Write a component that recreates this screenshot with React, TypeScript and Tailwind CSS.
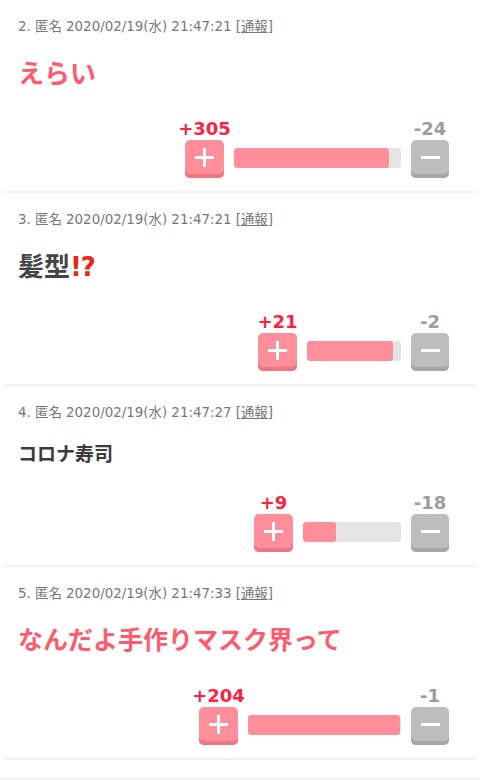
import { ReactNode } from "react";

interface Comment {
  no: number;
  time: string;
  body: ReactNode;
  titleClass: string;
  plus: number;
  minus: number;
  barWidth: number;
}

const comments: Comment[] = [
  {
    no: 2,
    time: "21:47:21",
    body: "えらい",
    titleClass: "text-[26px] leading-[40px] text-[#ff5b6e]",
    plus: 305,
    minus: 24,
    barWidth: 167,
  },
  {
    no: 3,
    time: "21:47:21",
    body: (
      <>
        髪型
        <span className="text-[#e8261a] tracking-[-1px]">!?</span>
      </>
    ),
    titleClass: "text-[26px] leading-[40px] text-[#444]",
    plus: 21,
    minus: 2,
    barWidth: 94,
  },
  {
    no: 4,
    time: "21:47:27",
    body: "コロナ寿司",
    titleClass: "text-[19px] leading-[28px] text-[#3c3c3c]",
    plus: 9,
    minus: 18,
    barWidth: 98,
  },
  {
    no: 5,
    time: "21:47:33",
    body: "なんだよ手作りマスク界って",
    titleClass: "text-[25px] leading-[40px] text-[#ff5b6e]",
    plus: 204,
    minus: 1,
    barWidth: 153,
  },
];

const font = "font-['DejaVu_Sans','Noto_Sans_CJK_JP',sans-serif]";

const VoteButton = ({ kind }: { kind: "plus" | "minus" }) => (
  <div
    className={
      kind === "plus"
        ? "w-[39px] h-[38px] shrink-0 rounded-[5px] bg-[#ff8e9a] shadow-[inset_0_-4px_0_#ec7682] flex items-center justify-center pb-[4px]"
        : "w-[38px] h-[38px] shrink-0 rounded-[5px] bg-[#bdbdbd] shadow-[inset_0_-4px_0_#a6a6a6] flex items-center justify-center pb-[4px]"
    }
  >
    <svg width="19" height="19" viewBox="0 0 19 19">
      <rect x="0" y="8" width="19" height="3" fill="#fff" />
      {kind === "plus" && <rect x="8" y="0" width="3" height="19" fill="#fff" />}
    </svg>
  </div>
);

const CommentRow = ({ c }: { c: Comment }) => {
  const fill = Math.round((c.barWidth * c.plus) / (c.plus + c.minus));
  return (
    <div className="mx-[5px] border-b-2 border-[#f1f1f1] px-[13px] pt-[17px] pb-[13px]">
      <div className="text-[13.4px] leading-[20px] text-[#777]">
        {c.no}. 匿名 2020/02/19(水) {c.time} [<span className="underline">通報</span>]
      </div>
      <div className={`mt-[17px] font-bold ${c.titleClass}`}>{c.body}</div>
      <div className="mt-[24px] flex justify-end pr-[13px]">
        <div className="flex items-end">
          <div className="w-[39px] flex flex-col items-center">
            <span className="whitespace-nowrap text-[18px] leading-[22px] font-bold text-[#ff2140]">+{c.plus}</span>
            <VoteButton kind="plus" />
          </div>
          <div
            className="mx-[10px] mb-[10px] h-[20px] rounded-[3px] bg-[#e4e4e4] overflow-hidden flex"
            style={{ width: c.barWidth }}
          >
            <div className="h-full bg-[#ff8e9a] rounded-[3px]" style={{ width: fill }} />
          </div>
          <div className="w-[38px] flex flex-col items-center">
            <span className="whitespace-nowrap text-[18px] leading-[22px] font-bold text-[#9c9c9c]">-{c.minus}</span>
            <VoteButton kind="minus" />
          </div>
        </div>
      </div>
    </div>
  );
};

export default function App() {
  return (
    <div className={`w-[480px] h-[780px] bg-white overflow-hidden ${font}`}>
      {comments.map((c) => (
        <CommentRow key={c.no} c={c} />
      ))}
      <div className="mt-[17px] h-[4px] bg-[#f4f4f4]" />
    </div>
  );
}
